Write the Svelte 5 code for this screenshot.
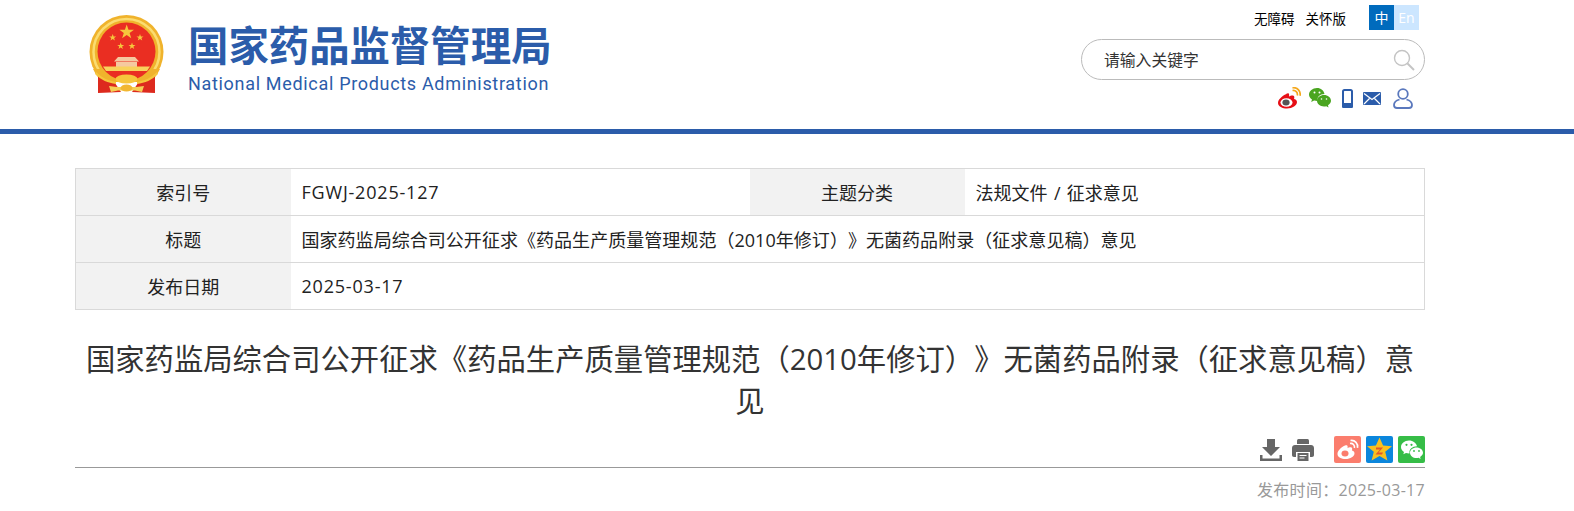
<script>
  const rows = [
    { label: '索引号', value: 'FGWJ-2025-127', latin: true, label2: '主题分类', value2: '法规文件 / 征求意见' },
    { label: '标题', value: '国家药监局综合司公开征求《药品生产质量管理规范（2010年修订）》无菌药品附录（征求意见稿）意见' },
    { label: '发布日期', value: '2025-03-17', latin: true }
  ]
  const title = '国家药监局综合司公开征求《药品生产质量管理规范（2010年修订）》无菌药品附录（征求意见稿）意见'
</script>

<header>
  <div class="head-inner">
    <div class="logo">
      <svg class="emblem" viewBox="0 0 75 79" width="75" height="79">
        <defs>
          <clipPath id="upper"><rect x="0" y="0" width="75" height="62" /></clipPath>
        </defs>
        <g clip-path="url(#upper)">
          <circle cx="37.500" cy="37" r="37" fill="#f0b32c" />
          <circle cx="37.500" cy="37" r="33" fill="none" stroke="#fbdc70" stroke-width="2.500" />
        </g>
        <path d="M4 54c3 6 6 10 10 13h47c4-3 7-7 10-13z" fill="#f0b32c" />
        <circle cx="37.500" cy="36.500" r="29" fill="#ea2e22" />
        <path d="M37.700 9.500l1.800 5.200h5.500l-4.400 3.300 1.700 5.300-4.600-3.200-4.600 3.200 1.700-5.300-4.400-3.300h5.500z" fill="#f6c63c" />
        <path d="M23.700 19l.9 2.400h2.600l-2.100 1.600.8 2.500-2.200-1.500-2.200 1.500.8-2.500-2.100-1.600h2.600zM51 19l.9 2.400h2.600l-2.100 1.600.8 2.500-2.200-1.500-2.200 1.500.8-2.500-2.100-1.600h2.600zM31.700 27.500l.9 2.400h2.600l-2.100 1.600.8 2.500-2.200-1.500-2.200 1.500.8-2.500-2.100-1.600h2.600zM43 27.500l.9 2.400h2.600l-2.100 1.600.8 2.500-2.200-1.500-2.200 1.500.8-2.500-2.100-1.600h2.600z" fill="#f6c63c" />
        <path d="M29 42h17l4 4.500H25zM27 47h21v5H27z" fill="#f5c9a0" />
        <path d="M14 51.500h47l-3 4.500H17z" fill="#f8d25c" />
        <path d="M9 60c5 5 11 7 17 8l6 9-23 1z" fill="#dd2a1e" />
        <path d="M66 60c-5 5-11 7-17 8l-6 9 23 1z" fill="#dd2a1e" />
        <path d="M7 57c6 6 13 9 20 10v2c-8-1-15-4-21-10zM68 57c-6 6-13 9-20 10v2c8-1 15-4 21-10z" fill="#f6c63c" />
        <ellipse cx="37.500" cy="64" rx="11" ry="4.500" fill="#f6c63c" />
        <path d="M20 71l8 1h19l8-1-2 6-7-1.500h-17l-7 1.500z" fill="#f5cf55" />
        <ellipse cx="37.500" cy="73" rx="6" ry="3.500" fill="#f2b731" />
      </svg>
      <div class="logo-text">
        <div class="cn">国家药品监督管理局</div>
        <div class="en">National Medical Products Administration</div>
      </div>
    </div>

    <div class="tools">
      <div class="links">
        <a href="#a">无障碍</a>
        <a href="#b">关怀版</a>
        <div class="lang"><span class="on">中</span><span class="off">En</span></div>
      </div>
      <div class="search">
        <span>请输入关键字</span>
        <svg viewBox="0 0 22 22" width="22" height="22" fill="none" stroke="#c4c4c4">
          <circle cx="9" cy="9" r="7.500" stroke-width="1.400" />
          <path d="M14.500 14.500l6.500 6.500" stroke-width="2" />
        </svg>
      </div>
      <div class="social">
        <svg viewBox="0 0 24 22" width="24" height="22">
          <path d="M9.500 7C4.500 9 1 13 1 16c0 3.500 4.500 5.500 9 5.500 5.500 0 10-3 10-6.500 0-2-2-2.800-3-3 .5-1.500.5-2.800-.5-3.300-1.200-.6-3.500.2-4.500.8.300-1.200.2-2.500-.3-3-.6-.5-1.500-.2-2.700.5z" fill="#e60f16" />
          <ellipse cx="9.500" cy="15.500" rx="6" ry="4.300" fill="#fff" />
          <ellipse cx="9" cy="15.500" rx="3.600" ry="3" fill="#555" />
          <path d="M15.500 3.500c3-.6 5.500 2 4.800 5M15.500.800c5-.8 8.500 3.500 7.500 8" fill="none" stroke="#f5a81c" stroke-width="1.700" />
        </svg>
        <svg class="wx" viewBox="0 0 22 20" width="22" height="20">
          <path d="M8 0C3.600 0 0 3 0 6.500c0 2 1.200 3.800 3 5l-.8 2.500 2.900-1.500c1 .3 2 .5 3 .5h.7C7.500 9 11 6 15.500 6c-.8-3.500-3.500-6-7.500-6z" fill="#4aa520" />
          <path d="M15 7c-3.800 0-7 2.600-7 5.800s3.200 5.700 7 5.700c.8 0 1.500-.1 2.300-.3l2.200 1.300-.5-2.200c1.800-1.100 3-2.700 3-4.500C22 9.600 18.800 7 15 7z" fill="#4aa520" />
          <circle cx="5.500" cy="4.500" r="1" fill="#fff" /><circle cx="10.500" cy="4.500" r="1" fill="#fff" />
          <circle cx="12.500" cy="11" r=".8" fill="#fff" /><circle cx="17.500" cy="11" r=".8" fill="#fff" />
        </svg>
        <svg viewBox="0 0 11 19" width="11" height="19">
          <rect x="1" y="1" width="9" height="17" rx="1.500" fill="none" stroke="#2b5caa" stroke-width="2" />
          <rect x="0" y="14" width="11" height="5" rx="1.500" fill="#2b5caa" />
        </svg>
        <svg viewBox="0 0 18 13" width="18" height="13">
          <rect width="18" height="13" rx="1" fill="#2b5caa" />
          <path d="M1 1.500l8 6 8-6M1 12l5.500-5.500M17 12l-5.500-5.500" fill="none" stroke="#fff" stroke-width="1.200" />
        </svg>
        <svg class="user" viewBox="0 0 20 21" width="20" height="21" fill="none" stroke="#5a78bd" stroke-width="1.800">
          <circle cx="10" cy="6" r="4.800" />
          <path d="M6.500 11.500C3 12.500 1 14.500 1 17c0 2 1 3 3 3h12c2 0 3-1 3-3 0-2.500-2-4.500-5.500-5.500" />
        </svg>
      </div>
    </div>
  </div>
</header>

<main>
  <table>
    <colgroup>
      <col class="c-label" /><col class="c-value" /><col class="c-label" /><col />
    </colgroup>
    <tbody>
      {#each rows as row}
        <tr>
          <th>{row.label}</th>
          {#if row.label2}
            <td class:latin={row.latin}>{row.value}</td>
            <th>{row.label2}</th>
            <td>{row.value2}</td>
          {:else}
            <td class:latin={row.latin} colspan="3">{row.value}</td>
          {/if}
        </tr>
      {/each}
    </tbody>
  </table>

  <h1>{title}</h1>

  <div class="actions">
    <svg class="gray" viewBox="0 0 22 22" width="22" height="22" fill="#666">
      <path d="M7 0h8v8h5l-9 9-9-9h5z" />
      <path d="M0 16h2.500v3.500h17V16H22v6H0z" />
    </svg>
    <svg class="gray print" viewBox="0 0 22 22" width="22" height="22">
      <path d="M5 1.500A1.500 1.500 0 0 1 6.500 0h9A1.500 1.500 0 0 1 17 1.500V5H5z" fill="#666" />
      <path d="M3 6h16c1.700 0 3 1.300 3 3v7c0 1-.7 2-2 2h-2v-5H4v5H2c-1.300 0-2-1-2-2V9c0-1.700 1.300-3 3-3z" fill="#666" />
      <path d="M5.500 14h11v8h-11z" fill="#666" />
      <path d="M7.500 16.500h7M7.500 19h5" stroke="#fff" stroke-width="1" />
    </svg>
    <span class="share weibo">
      <svg viewBox="0 0 27 27" width="27" height="27">
        <path d="M11 9.500c-4.500 2-7.500 5.500-7.500 8.500 0 3.200 4 5 8 5 5 0 9-2.700 9-5.800 0-1.700-1.700-2.500-2.600-2.700.5-1.300.5-2.500-.4-3-1-.5-3.200.2-4 .7.300-1.200.2-2.300-.3-2.700-.5-.4-1.200-.2-2.200 0z" fill="#fff" />
        <ellipse cx="11" cy="17.500" rx="3.500" ry="3" fill="#fb7d6d" />
        <path d="M16 7.500c2.800-.6 5 1.800 4.400 4.500M16.500 4.500c4.500-.7 7.800 3.200 7 7.300" fill="none" stroke="#fff" stroke-width="1.600" />
      </svg>
    </span>
    <span class="share qzone">
      <svg viewBox="0 0 27 27" width="27" height="27">
        <path d="M13.500 1.500l3.600 8 8.900.7-6.800 5.500 2.200 8.800-7.900-4.600-7.900 4.600 2.200-8.800L1 10.200l8.900-.7z" fill="#f9c01e" />
        <path d="M10 11.500h7l-4.500 5H17l-1 2H9.500l4.500-5h-4z" fill="#e2562a" />
      </svg>
    </span>
    <span class="share wechat">
      <svg viewBox="0 0 27 27" width="27" height="27" fill="#fff">
        <path d="M11 4.500C6.500 4.500 3 7.500 3 11c0 2 1.100 3.700 3 5l-.7 2.300L8 17c1 .3 2 .4 3 .4l.6-.1c-.9-3.900 2.900-7 7.400-7-.7-3.300-4-5.800-8-5.800z" />
        <path d="M18.500 11.500c-3.600 0-6.500 2.400-6.500 5.300s2.900 5.300 6.500 5.300c.7 0 1.400-.1 2.100-.3l2 1.200-.5-2c1.700-1 2.900-2.500 2.900-4.200 0-2.900-2.900-5.300-6.500-5.300z" />
        <circle cx="8.500" cy="8.800" r="1.100" fill="#36bd47" /><circle cx="13.500" cy="8.800" r="1.100" fill="#36bd47" />
        <circle cx="16" cy="15" r=".9" fill="#36bd47" /><circle cx="21" cy="15" r=".9" fill="#36bd47" />
      </svg>
    </span>
  </div>

  <div class="date">发布时间：2025-03-17</div>
</main>

<style>
  :global(body) {
    background: #fff;
    color: #333;
    font-family: "Open Sans", "Noto Sans CJK SC", sans-serif;
    text-spacing-trim: space-all;
  }

  header {
    border-bottom: 5px solid #2b5caa;
  }

  .head-inner {
    display: flex;
    justify-content: space-between;
    width: 1350px;
    height: 129px;
    margin-left: 75px;
  }

  .logo {
    display: flex;
    gap: 24px;
    padding: 15px 0 0 14px;
  }

  .logo-text {
    color: #2b5caa;
  }

  .cn {
    font-family: "Noto Sans CJK SC", sans-serif;
    font-size: 40.400px;
    font-weight: 700;
    line-height: 46px;
    margin-top: 6px;
  }

  .en {
    font-family: Roboto, sans-serif;
    font-size: 18px;
    line-height: 22px;
    margin-top: 6px;
    letter-spacing: 0.68px;
    white-space: nowrap;
  }

  .tools {
    display: flex;
    flex-direction: column;
    align-items: flex-end;
    width: 344px;
    padding-top: 5px;
  }

  .links {
    display: flex;
    align-items: center;
    height: 25px;
    padding-right: 6px;
    font-size: 13.500px;
  }

  .links a {
    color: #000;
    text-decoration: none;
    margin-right: 11px;
  }

  .lang {
    display: flex;
    margin-left: 12px;
  }

  .lang span {
    width: 25px;
    height: 25px;
    line-height: 25px;
    text-align: center;
    font-size: 14px;
    color: #fff;
  }

  .lang .on { background: #006bbd; }
  .lang .off { background: #cce6ff; }

  .search {
    display: flex;
    align-items: center;
    justify-content: space-between;
    box-sizing: border-box;
    width: 344px;
    height: 41px;
    margin-top: 9px;
    padding: 0 9px 0 22px;
    border: 1px solid #bbb;
    border-radius: 21px;
    font-size: 15.800px;
    color: #333;
  }

  .social {
    display: flex;
    align-items: center;
    margin-top: 7px;
    padding-right: 12px;
    gap: 10px;
  }

  .social .wx {
    margin: 0 1px 0 -2px;
  }

  .social .user {
    margin-left: 2px;
  }

  main {
    width: 1350px;
    margin-left: 75px;
    padding-top: 34px;
  }

  table {
    width: 100%;
    table-layout: fixed;
    border-collapse: collapse;
    font-size: 18px;
  }

  .c-label { width: 215px; }
  .c-value { width: 459px; }

  th, td {
    height: 45px;
    padding: 0 0 1px;
    border-top: 1px solid #d9d9d9;
    border-bottom: 1px solid #d9d9d9;
    color: #222;
    font-weight: 400;
  }

  th {
    background: #f2f2f2;
    text-align: center;
  }

  td {
    padding-left: 11px;
    text-align: left;
    letter-spacing: 0.04px;
    word-spacing: 1.500px;
  }

  td.latin {
    letter-spacing: 0.8px;
  }

  tr > :first-child { border-left: 1px solid #d9d9d9; }
  tr > :last-child { border-right: 1px solid #d9d9d9; }

  h1 {
    margin: 28px 0 0;
    font-size: 29.330px;
    font-weight: 400;
    line-height: 42px;
    text-align: center;
    color: #333;
  }

  .actions {
    display: flex;
    justify-content: flex-end;
    align-items: center;
    height: 30px;
    margin-top: 12px;
    padding-bottom: 3px;
    border-bottom: 1px solid #999;
    gap: 5px;
  }

  .gray {
    margin-top: 2px;
  }

  .print {
    margin: 2px 15px 0 5px;
  }

  .share {
    display: block;
    width: 27px;
    height: 27px;
    border-radius: 2px;
  }

  .share svg { display: block; }

  .weibo { background: #fb7d6d; }
  .qzone { background: #0b86dc; }
  .wechat { background: #36bd47; }

  .date {
    margin-top: 10px;
    text-align: right;
    font-size: 16px;
    line-height: 24px;
    letter-spacing: 0.3px;
    color: #999;
  }
</style>
